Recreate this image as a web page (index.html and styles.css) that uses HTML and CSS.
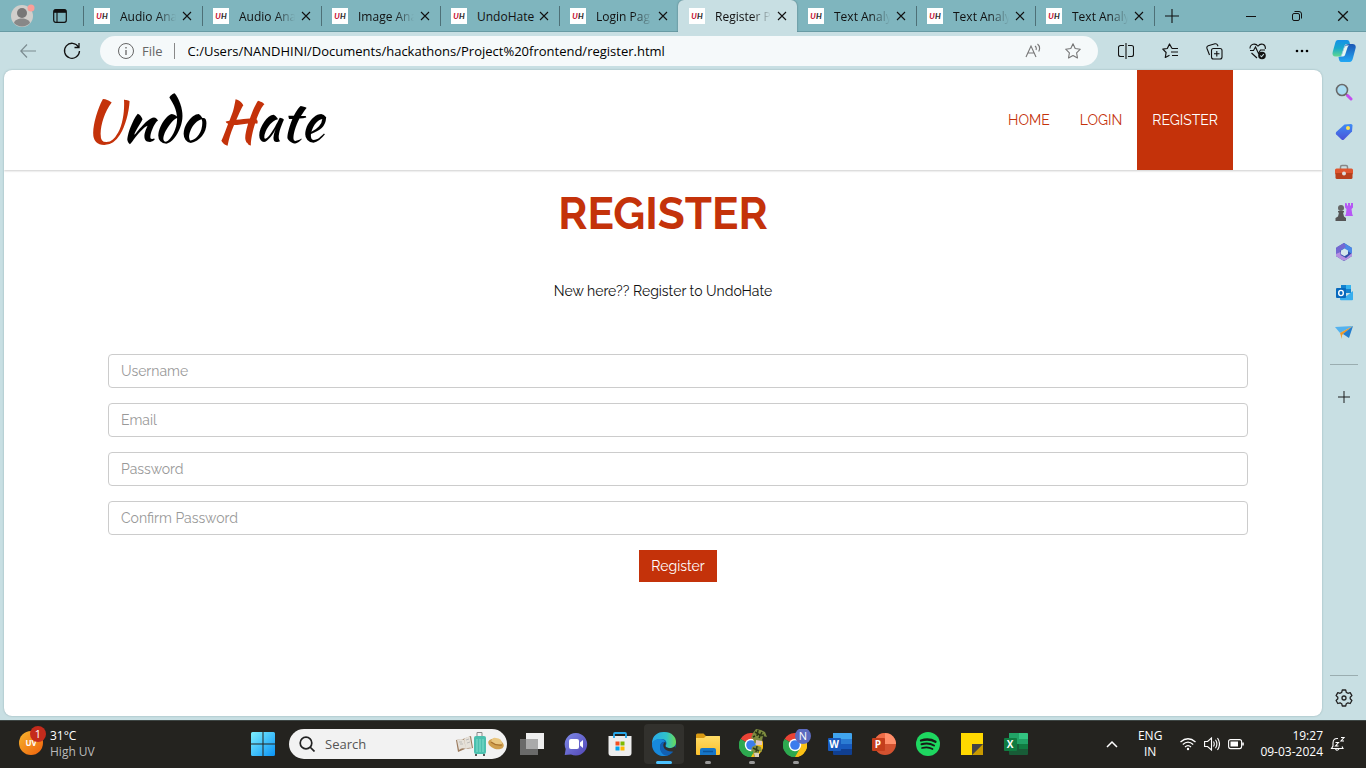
FILE: index.html
```
<!DOCTYPE html>
<html lang="en">
<head>
    <meta charset="UTF-8">
    <meta name="viewport" content="width=device-width, initial-scale=1.0">
    <title>Register Page</title>
    <link rel="stylesheet" href="styles.css">
</head>
<body>

    <!-- shared icons -->
    <svg class="defs" width="0" height="0" aria-hidden="true">
        <defs>
            <linearGradient id="gEdge" x1="0" y1="0" x2="1" y2="0"><stop offset="0" stop-color="#29a9ea"/><stop offset=".6" stop-color="#2fc2c8"/><stop offset="1" stop-color="#6bdc58"/></linearGradient>
            <linearGradient id="gWin" x1="0" y1="0" x2="1" y2="1"><stop offset="0" stop-color="#7df0ff"/><stop offset="1" stop-color="#0a93f5"/></linearGradient>
            <linearGradient id="gCopA" x1="0" y1="0" x2="0" y2="1"><stop offset="0" stop-color="#1590e8"/><stop offset=".5" stop-color="#18a8cc"/><stop offset="1" stop-color="#62d88e"/></linearGradient>
            <linearGradient id="gCopB" x1="0" y1="0" x2="0" y2="1"><stop offset="0" stop-color="#1c56b4"/><stop offset="1" stop-color="#22a8f5"/></linearGradient>
            <linearGradient id="gChat" x1="0" y1="0" x2="1" y2="1"><stop offset="0" stop-color="#7f8be8"/><stop offset="1" stop-color="#5145b5"/></linearGradient>
            <linearGradient id="gUv" x1="0" y1="0" x2="1" y2="1"><stop offset="0" stop-color="#f5b52e"/><stop offset="1" stop-color="#ef5f0b"/></linearGradient>
            <linearGradient id="gTag" x1="0" y1="0" x2="0" y2="1"><stop offset="0" stop-color="#3f8cf5"/><stop offset="1" stop-color="#4a52d8"/></linearGradient>
            <linearGradient id="gFold" x1="0" y1="0" x2="0" y2="1"><stop offset="0" stop-color="#ffdc67"/><stop offset="1" stop-color="#fbc02d"/></linearGradient>
        </defs>
        <symbol id="close" viewBox="0 0 10 10"><path d="M1 1l8 8M9 1l-8 8" fill="none" stroke="#111" stroke-width="1.1"/></symbol>
        <symbol id="plus" viewBox="0 0 14 14"><path d="M7 0v14M0 7h14" fill="none" stroke="#111" stroke-width="1.1"/></symbol>
        <symbol id="chrome" viewBox="0 0 24 24">
            <path d="M12 12L1.6 6A12 12 0 0 1 22.4 6z" fill="#ea4335"/>
            <path d="M12 12L22.4 6A12 12 0 0 1 12 24z" fill="#fbbc05"/>
            <path d="M12 12L12 24A12 12 0 0 1 1.6 6z" fill="#34a853"/>
            <path d="M12 6h10.4A12 12 0 0 1 12 24l5.2-9z" fill="#fbc116"/>
            <path d="M12 24l5.2-9-5.2 3-5.2-3L1.6 6A12 12 0 0 0 12 24z" fill="#2da94f"/>
            <circle cx="12" cy="12" r="6.2" fill="#fff"/>
            <circle cx="12" cy="12" r="4.8" fill="#3b7ded"/>
        </symbol>
    </svg>

    <header class="tabbar">
        <div class="tab-tools">
            <button class="profile" aria-label="Profile">
                <svg width="26" height="24" viewBox="0 0 26 24">
                    <circle cx="12" cy="12" r="11" fill="#d0cecb"/>
                    <circle cx="12" cy="9" r="5" fill="#777"/>
                    <path d="M4 19c1-6 15-6 16 0a11 11 0 0 1-16 0z" fill="#888"/>
                    <circle cx="21" cy="4" r="3.500" fill="#fa9e98"/>
                </svg>
            </button>
            <button class="workspaces" aria-label="Tab actions">
                <svg width="14" height="14" viewBox="0 0 14 14"><rect x=".7" y=".7" width="12.600" height="12.600" rx="2" fill="none" stroke="#111" stroke-width="1.200"/><path d="M1 2.300h12" stroke="#111" stroke-width="3"/><path d="M4 3v10" stroke="#111" stroke-width="1.100"/></svg>
            </button>
        </div>
        <div class="tab"><span class="favicon"><i>U</i>H</span><span class="tab-title">Audio Ana</span><button class="tab-close" aria-label="Close tab"><svg><use href="#close"/></svg></button></div>
        <div class="tab"><span class="favicon"><i>U</i>H</span><span class="tab-title">Audio Ana</span><button class="tab-close" aria-label="Close tab"><svg><use href="#close"/></svg></button></div>
        <div class="tab"><span class="favicon"><i>U</i>H</span><span class="tab-title">Image Ana</span><button class="tab-close" aria-label="Close tab"><svg><use href="#close"/></svg></button></div>
        <div class="tab"><span class="favicon"><i>U</i>H</span><span class="tab-title whole">UndoHate</span><button class="tab-close" aria-label="Close tab"><svg><use href="#close"/></svg></button></div>
        <div class="tab"><span class="favicon"><i>U</i>H</span><span class="tab-title">Login Pag</span><button class="tab-close" aria-label="Close tab"><svg><use href="#close"/></svg></button></div>
        <div class="tab active"><span class="favicon"><i>U</i>H</span><span class="tab-title">Register P</span><button class="tab-close" aria-label="Close tab"><svg><use href="#close"/></svg></button></div>
        <div class="tab"><span class="favicon"><i>U</i>H</span><span class="tab-title">Text Analy</span><button class="tab-close" aria-label="Close tab"><svg><use href="#close"/></svg></button></div>
        <div class="tab"><span class="favicon"><i>U</i>H</span><span class="tab-title">Text Analy</span><button class="tab-close" aria-label="Close tab"><svg><use href="#close"/></svg></button></div>
        <div class="tab"><span class="favicon"><i>U</i>H</span><span class="tab-title">Text Analy</span><button class="tab-close" aria-label="Close tab"><svg><use href="#close"/></svg></button></div>
        <button class="new-tab" aria-label="New tab"><svg width="14" height="14"><use href="#plus"/></svg></button>
        <div class="window-controls">
            <button aria-label="Minimize"><svg width="10" height="10"><path d="M0 5.500h10" stroke="#111"/></svg></button>
            <button aria-label="Restore"><svg width="10" height="10" viewBox="0 0 10 10" fill="none" stroke="#111"><rect x=".5" y="2.500" width="7" height="7" rx="1.500"/><path d="M2.500.5H7a2.500 2.500 0 0 1 2.500 2.500V7.500"/></svg></button>
            <button aria-label="Close"><svg width="12" height="12"><use href="#close"/></svg></button>
        </div>
    </header>

    <div class="toolbar">
        <button class="tool" aria-label="Back"><svg width="16" height="14" viewBox="0 0 16 14" fill="none" stroke="#7b8b90" stroke-width="1.200"><path d="M16 7H1M7 .5L.8 7 7 13.500"/></svg></button>
        <button class="tool" aria-label="Refresh"><svg width="18" height="18" viewBox="0 0 18 18" fill="none" stroke="#111" stroke-width="1.300"><path d="M15.500 5A7.500 7.500 0 1 0 16.500 9M16 1v4.500h-4.500"/></svg></button>
        <div class="address">
            <svg width="16" height="16" viewBox="0 0 16 16" fill="none" stroke="#666"><circle cx="8" cy="8" r="7.500"/><path d="M8 7v5M8 4v1.500" stroke-width="1.300"/></svg>
            <span class="scheme">File</span>
            <input class="url" type="text" aria-label="Address" value="C:/Users/NANDHINI/Documents/hackathons/Project%20frontend/register.html">
            <button class="address-btn" aria-label="Read aloud"><svg width="16" height="16" viewBox="0 0 16 16" fill="none" stroke="#777" stroke-width="1.100"><path d="M1 14L6 3l5 11M2.800 10h6.400M10 3q2 1.500 1 4M12.500 1q3.500 3 1.200 7.500"/></svg></button>
            <button class="address-btn" aria-label="Favorite"><svg width="16" height="16" viewBox="0 0 16 16" fill="none" stroke="#777" stroke-width="1.100" stroke-linejoin="round"><path d="M8 .8l2.200 4.700 5.100.7-3.700 3.600.9 5.200L8 12.500 3.500 15l.9-5.200L.7 6.200l5.100-.7z"/></svg></button>
        </div>
        <button class="tool" aria-label="Split screen"><svg width="16" height="16" viewBox="0 0 16 16" fill="none" stroke="#111" stroke-width="1.100"><path d="M6 2.500H2.500a2 2 0 0 0-2 2v7a2 2 0 0 0 2 2H6M10 2.500h3.500a2 2 0 0 1 2 2v7a2 2 0 0 1-2 2H10M8 0v16"/></svg></button>
        <button class="tool" aria-label="Favorites"><svg width="17" height="16" viewBox="0 0 17 16" fill="none" stroke="#111" stroke-width="1.200" stroke-linejoin="round"><path d="M10 5.500L7.500 1 5.300 5.500.8 6.200l3.300 3.300-.8 5 4.200-2.300M10 5.500h6M9 9h7M10 12.500h6"/></svg></button>
        <button class="tool" aria-label="Collections"><svg width="17" height="17" viewBox="0 0 17 17" fill="none" stroke="#111" stroke-width="1.100"><rect x="5.500" y="5.500" width="10.500" height="10.500" rx="2"/><path d="M3.500 12L1 5.500q-.7-2 1.200-2.800L9 .800q1.800-.4 2.500 1.200l.5 1.200M10.800 8v5.500M8 10.800h5.500"/></svg></button>
        <button class="tool" aria-label="Browser essentials"><svg width="18" height="17" viewBox="0 0 18 17" fill="none" stroke="#111" stroke-width="1.100"><path d="M9 3.300C6.500-.5 1 1 1 5.500M9 3.300c2.500-3.800 8-2.300 7.300 2.700M2.500 10L8 15M1 7.500h3.500L6.500 4l3 6.500 2-3.500H16"/><circle cx="13" cy="12.500" r="3.800" fill="#111" stroke="none"/><path d="M11.300 12.500l1.200 1.300 2.300-2.600" stroke="#c8dfe3"/></svg></button>
        <button class="tool" aria-label="More"><svg width="14" height="4"><circle cx="2" cy="2" r="1.300"/><circle cx="7" cy="2" r="1.300"/><circle cx="12" cy="2" r="1.300"/></svg></button>
        <button class="tool copilot" aria-label="Copilot">
            <svg width="24" height="24" viewBox="0 0 24 24">
                <path d="M6 1h9c2 0 2.500 1.500 3 4h-3c-2 0-2.500 1.500-3 3l-2.500 7.500c-.5 1.500-1.300 2-3 2H3.500C1 17.500 0 15.500.7 13l2.500-9C3.700 2 4.500 1 6 1z" fill="url(#gCopA)"/>
                <path d="M17.500 5h3c2.500 0 3.800 2 3 4.500L21 19c-.7 2.500-1.500 4-3.500 4h-8C7.500 23 7 21 6.500 18c2.300 0 3-1 3.500-2.500L12.500 8c.7-2 2-3 5-3z" fill="url(#gCopB)"/>
                <path d="M14.500 6.500c-1.500.5-2 1.500-2.500 3l-2 6c-.2 1-1 1.700-1.700 2H11c1.200 0 1.800-.8 2.200-2l2.300-7c.4-1 .8-1.600 2-2z" fill="#e6f7f2"/>
            </svg>
        </button>
    </div>

    <div class="content">
        <main class="page">
            <nav class="navbar">
                <div class="container">
                    <a class="brand" href="#"><span>U</span>ndo <span>H</span>ate</a>
                    <div class="menu">
                        <a href="#">HOME</a>
                        <a href="#">LOGIN</a>
                        <a href="#" class="current">REGISTER</a>
                    </div>
                </div>
            </nav>

            <h1>REGISTER</h1>
            <p class="intro">New here?? Register to UndoHate</p>

            <form class="register-form">
                <input type="text" placeholder="Username" aria-label="Username">
                <input type="email" placeholder="Email" aria-label="Email">
                <input type="password" placeholder="Password" aria-label="Password">
                <input type="password" placeholder="Confirm Password" aria-label="Confirm Password">
                <button type="submit">Register</button>
            </form>
        </main>

        <aside class="sidebar">
            <button aria-label="Search"><svg width="18" height="18" viewBox="0 0 18 18"><path d="M11 11l2.500 2.500" stroke="#777" stroke-width="2"/><path d="M12.500 12.500L16 16" stroke="#c44df0" stroke-width="3" stroke-linecap="round"/><circle cx="7" cy="7" r="5.500" fill="#a9dcf2" stroke="#6a6a6a" stroke-width="1.600"/></svg></button>
            <button aria-label="Shopping"><svg width="18" height="18" viewBox="0 0 18 18"><path d="M9.500 1.500L16 1q1.500 0 1.500 1.500L17 8.500 9 16.500q-1.200 1-2.500 0L1.200 11.500q-1-1.200 0-2.500z" fill="url(#gTag)"/><circle cx="13" cy="5" r="2" fill="#ffe14d"/></svg></button>
            <button aria-label="Tools"><svg width="18" height="16" viewBox="0 0 18 16"><path d="M5.500 5V3q0-1.500 1.500-1.500h4q1.500 0 1.500 1.500v2" fill="none" stroke="#888" stroke-width="1.500"/><rect y="4.500" width="18" height="6" rx="1.500" fill="#df562f"/><path d="M.5 9h17v4.500q0 1.500-1.500 1.500H2q-1.500 0-1.500-1.500z" fill="#b8401d"/><circle cx="9" cy="9.500" r="2" fill="#ddd"/></svg></button>
            <button aria-label="Games"><svg width="18" height="18" viewBox="0 0 18 18"><path d="M10 0l2 .5v2h1V0h2v2.500h1V0h2v4.500L16.500 6l.7 5 .8 2h-8l1-2 .5-5-1.500-1.500z" fill="#b657f5"/><circle cx="6" cy="5" r="3" fill="#666"/><path d="M3 8h6v1.500H8l1 4 2 1.500v3H.5v-3l2.500-1.500 1-4H3z" fill="#555"/></svg></button>
            <button aria-label="Microsoft 365"><svg width="18" height="18" viewBox="0 0 18 18"><path d="M9 0l8 5v8l-8 5-8-5V5z" fill="#344fa8"/><path d="M9 0l8 5v6L9 5.500 4 8z" fill="#4a8ae8"/><path d="M9 0L2 4Q1 5 1 6v7l4.500 1.500V7L11 4z" fill="#7468d2"/><path d="M1 11l4.500-2v3L11 15l6-5v3l-6 4q-2 1-4 0l-6-4z" fill="#b690e2"/><path d="M9.500 5.500l3.500 2v3.500l-3.500 2.200-3.500-2V7.500z" fill="#d5e8ec"/></svg></button>
            <button aria-label="Outlook"><svg width="17" height="17" viewBox="0 0 17 17"><path d="M5 1h10v8H5z" fill="#1382cf"/><path d="M10 1h5v4h-5z" fill="#36b4ef"/><path d="M4 8l6.500 4L17 7v8.500q0 .8-1 .8H5q-1 0-1-1z" fill="#38aeee"/><rect y="4" width="10" height="10" rx="1" fill="#0869bd"/><ellipse cx="5" cy="9" rx="2.300" ry="2.600" fill="none" stroke="#fff" stroke-width="1.400"/></svg></button>
            <button aria-label="Drop"><svg width="18" height="16" viewBox="0 0 18 16"><path d="M0 3L18 2 5 9z" fill="#54b2ee"/><path d="M5 9L18 2 7 11v4z" fill="#ef9929"/><path d="M18 2L8 10l6 4z" fill="#237dce"/></svg></button>
            <hr>
            <button aria-label="Customize"><svg width="12" height="12"><use href="#plus"/></svg></button>
            <div class="sidebar-bottom">
                <hr>
                <button aria-label="Settings"><svg width="18" height="18" viewBox="0 0 18 18" fill="none" stroke="#222" stroke-width="1.300" stroke-linejoin="round"><path d="M7.300 1h3.400l.6 2.400 1.600.9 2.300-.7 1.700 3-1.700 1.700v1.500l1.700 1.700-1.700 3-2.300-.7-1.600.9-.6 2.300H7.300l-.6-2.300-1.600-.9-2.300.7-1.700-3 1.700-1.700V8.300L1.100 6.600l1.700-3 2.300.7 1.600-.9z"/><circle cx="9" cy="9" r="2"/></svg></button>
            </div>
        </aside>
    </div>

    <footer class="taskbar">
        <button class="weather">
            <svg width="28" height="30" viewBox="0 0 28 30">
                <circle cx="12" cy="17" r="12" fill="url(#gUv)"/>
                <text x="12" y="20" class="uv-text">UV</text>
                <circle cx="19" cy="8" r="8" fill="#c42b1c"/>
                <text x="19" y="12" class="badge-text">1</text>
            </svg>
            <span class="weather-text"><b>31°C</b><span>High UV</span></span>
        </button>

        <div class="apps">
            <button class="app" aria-label="Start"><svg width="24" height="24" viewBox="0 0 24 24"><path d="M1.500 0H11.500V11.500H0V1.500Q0 0 1.500 0zM12.500 0H22.500Q24 0 24 1.500V11.500H12.500zM0 12.500H11.500V24H1.500Q0 24 0 22.500zM12.500 12.500H24V22.500Q24 24 22.500 24H12.500z" fill="url(#gWin)"/></svg></button>
            <div class="search">
                <svg width="16" height="16" viewBox="0 0 16 16" fill="none" stroke="#222" stroke-width="1.700"><circle cx="7" cy="7" r="5.800"/><path d="M11 11l4.500 4.500"/></svg>
                <input type="search" placeholder="Search" aria-label="Search">
                <svg width="48" height="26" viewBox="0 0 48 26">
                    <path d="M0 9l7-1 8-3 2 12-8 1-7 3z" fill="#9b7a5d"/><path d="M1 9q4-2 7 0l2 9q-4-2-7 1zM8 8q3-3 6-2l2 11q-3-1-6 1z" fill="#e5e0d8"/><path d="M3 11l3 0M4 13l3 0M10 9l3-1M11 12l3-1" stroke="#aaa" stroke-width=".7"/>
                    <path d="M21 7V1.500h5V7" fill="none" stroke="#888"/><rect x="18" y="5" width="12" height="18" rx="2" fill="#4bbfae"/><path d="M21 8v13M24 8v13M27 8v13" stroke="#82dfce"/><path d="M20 23v2M28 23v2" stroke="#555" stroke-width="2"/>
                    <ellipse cx="40" cy="13" rx="8" ry="5" transform="rotate(18 40 13)" fill="#cf9f4e"/><path d="M35 11q1-5 5-4 6 0 6 6-6 2-11-2z" fill="#e9c781"/><path d="M35 11q5 4 11 3" fill="none" stroke="#a8712d" stroke-width="1.200"/>
                </svg>
            </div>
            <button class="app" aria-label="Task view"><svg width="24" height="24" viewBox="0 0 24 24"><rect x="6" y="1" width="18" height="16" fill="#eee"/><rect y="7" width="18" height="16" fill="#777" fill-opacity=".85"/><rect x="6" y="7" width="12" height="10" fill="#aaa"/></svg></button>
            <button class="app" aria-label="Chat"><svg width="24" height="24" viewBox="0 0 24 24"><path d="M12 1a11.300 11.300 0 1 1-5 21.500L.7 23l1-6A11.300 11.300 0 0 1 12 1z" fill="url(#gChat)"/><rect x="5" y="7" width="10" height="10" rx="2" fill="#fff"/><path d="M16 10.500l3-2.500v8l-3-2.500z" fill="#fff"/></svg></button>
            <button class="app" aria-label="Store"><svg width="24" height="24" viewBox="0 0 24 24"><path d="M.5 4h23v17q0 3-3 3h-17q-3 0-3-3z" fill="#eee"/><path d="M6 6V2q0-1 1-1h10q1 0 1 1v4" fill="none" stroke="#28a8ea" stroke-width="1.800"/><path d="M7.500 9.500h4v4h-4z" fill="#f25022"/><path d="M12.500 9.500h4v4h-4z" fill="#7fba00"/><path d="M7.500 14.500h4v4h-4z" fill="#00a4ef"/><path d="M12.500 14.500h4v4h-4z" fill="#ffb900"/></svg></button>
            <button class="app focused" aria-label="Edge"><svg width="24" height="24" viewBox="0 0 24 24"><circle cx="12" cy="12" r="12" fill="#0c59a4"/><path d="M0 12C0 3 6 0 12 0c8 0 12 5 12 10 0 4-3 6-6 6-3 0-5-1-4-3 1-1.500.8-6-4.500-6C5 7 1 9 0 12z" fill="url(#gEdge)"/><path d="M0 12c1-4 5-5.500 9-5 3 .3 4 2 4.500 3-3-1-5.500 1-5.500 5 0 5 4 8 8 8.500C8 26 0 21 0 12z" fill="#1789dc"/><path d="M13 10c2 2-1 3.500 1 5 2 1.600 6 1.600 8.500-.5l1.500 2-1 3q-4 1.500-8 0c-5-2-5.500-7-2-9.500z" fill="#32312d"/><path d="M8 15c0-3 2-5 4-5-2 4 0 10 9 9.500-2 2-4 4-7 4.300-4-1-6-5-6-8.800z" fill="#1260b3"/></svg></button>
            <button class="app running" aria-label="File Explorer"><svg width="24" height="24" viewBox="0 0 24 24"><path d="M0 3q0-1.500 1.500-1.500h6L10 4h14v4H0z" fill="#d99a12"/><path d="M0 6h8l2-2h13q1 0 1 1v17q0 1-1 1H1q-1 0-1-1z" fill="url(#gFold)"/><path d="M4 23v-5q0-2 2-2h12q2 0 2 2v5z" fill="#1676c8"/><path d="M7 19.500h10" stroke="#0b559c" stroke-width="1.500"/></svg></button>
            <button class="app running" aria-label="Chrome">
                <svg width="30" height="30" viewBox="0 0 30 30"><use href="#chrome" x="2" y="4" width="24" height="24"/><path d="M16 4l3-4 5 1 4 2 2 5-4-1-1 5h-5l-2 3-2-5-2-1z" fill="#7d8b3f"/><path d="M18 3l5 3M21 1l-1 6M25 3l-3 6M27 6l-5 1M18 7l-2 1" stroke="#293315" stroke-width="1.500"/><path d="M19 11l6 1v4h-6z" fill="#e1c6bd"/><path d="M15 18l4-2 5 2 1 5-3-1v5h-5l-1-5-2 1z" fill="#858f3f"/><path d="M16 19l6 3M20 17l-1 6" stroke="#333d1a" stroke-width="1.500"/><path d="M17 24h5v4h-4z" fill="#d9cebb"/></svg>
            </button>
            <button class="app running" aria-label="Chrome, profile N">
                <svg width="30" height="30" viewBox="0 0 30 30"><use href="#chrome" x="2" y="4" width="24" height="24"/><circle cx="22" cy="7" r="8" fill="#5c6bc0"/><text x="22" y="11" class="badge-text">N</text></svg>
            </button>
            <button class="app" aria-label="Word"><svg width="24" height="24" viewBox="0 0 24 24"><path d="M5 1h18q1 0 1 1v5H5z" fill="#41a5ee"/><path d="M5 7h19v5H5z" fill="#2b7cd3"/><path d="M5 12h19v5H5z" fill="#185abd"/><path d="M5 17h19v5q0 1-1 1H6q-1 0-1-1z" fill="#103f91"/><rect y="6" width="13" height="13" rx="1" fill="#185abd"/><text x="6" y="16" class="office">W</text></svg></button>
            <button class="app" aria-label="PowerPoint"><svg width="24" height="24" viewBox="0 0 24 24"><circle cx="13" cy="12" r="11" fill="#d35230"/><path d="M13 1a11 11 0 0 1 11 11H13z" fill="#ff8f6b"/><path d="M13 1a11 11 0 0 0-11 11h11z" fill="#ed6c47"/><rect y="6" width="13" height="13" rx="1" fill="#c43e1c"/><text x="6" y="16" class="office">P</text></svg></button>
            <button class="app" aria-label="Spotify"><svg width="24" height="24" viewBox="0 0 24 24" fill="none" stroke="#171a17" stroke-linecap="round"><circle cx="12" cy="12" r="12" fill="#1ed760" stroke="none"/><path d="M5 8.500q8-2.500 14.500 1.200" stroke-width="2.300"/><path d="M5.500 12.300q7-2 12.500 1.200" stroke-width="2"/><path d="M6 16q6-1.700 10.500 1" stroke-width="1.700"/></svg></button>
            <button class="app" aria-label="Sticky Notes"><svg width="22" height="22" viewBox="0 0 22 22"><path d="M0 0h22v11L11 22H0z" fill="#ffd800"/><path d="M11 22l11-11v11z" fill="#c99a00"/><path d="M11 11h11L11 22z" fill="#444"/></svg></button>
            <button class="app" aria-label="Excel"><svg width="24" height="24" viewBox="0 0 24 24"><rect x="5" y="1" width="19" height="22" rx="1" fill="#185c37"/><path d="M5 1h10v11H5z" fill="#21a366"/><path d="M15 1h8q1 0 1 1v5h-9z" fill="#33c481"/><path d="M15 7h9v5h-9z" fill="#21a366"/><path d="M15 12h9v5h-9z" fill="#107c41"/><rect y="6" width="13" height="13" rx="1" fill="#107c41"/><text x="6" y="16" class="office">X</text></svg></button>
        </div>

        <div class="tray">
            <button aria-label="Hidden icons"><svg width="12" height="8" fill="none" stroke="#fff" stroke-width="1.500"><path d="M1 7l5-5 5 5"/></svg></button>
            <button class="lang">ENG<br>IN</button>
            <button class="status" aria-label="Network, sound, battery">
                <svg width="16" height="16" viewBox="0 0 16 16" fill="none" stroke="#fff" stroke-width="1.300"><path d="M.5 6q7.500-6.500 15 0M2.800 8.500q5.200-4.700 10.400 0M5 11q3-2.700 6 0"/><circle cx="8" cy="13" r="1.200" fill="#fff" stroke="none"/></svg>
                <svg width="16" height="16" viewBox="0 0 16 16" fill="none" stroke="#fff" stroke-width="1.100"><path d="M.6 5.500h3L7.500 2v12l-3.900-3.500h-3zM9.500 5.500q1.500 2.500 0 5M11.500 3.800q2.800 4.200 0 8.400M13.500 2q4 6 0 12"/></svg>
                <svg width="16" height="16" viewBox="0 0 16 16" fill="none" stroke="#fff" stroke-width="1.100"><rect x=".6" y="3.600" width="13" height="9" rx="2"/><rect x="2.500" y="5.500" width="7.500" height="5" fill="#fff" stroke="none"/><path d="M15 6.500v3" stroke-width="1.600"/></svg>
            </button>
            <button class="clock">19:27<br>09-03-2024</button>
            <button aria-label="Notifications"><svg width="16" height="16" viewBox="0 0 16 16" fill="none" stroke="#fff" stroke-width="1.100"><path d="M8 2.500Q3 2 3 7v3l-1.500 2.500h11.500L12 10.500M5.500 13q1.500 2.500 3.500 0M5.500 6.500h3l-3 3.500h3M11 1.500h3L11 5h3"/></svg></button>
        </div>
    </footer>

</body>
</html>
```
FILE: styles.css
```
* {
    box-sizing: border-box;
}

body {
    margin: 0;
    height: 100vh;
    display: flex;
    flex-direction: column;
    overflow: hidden;
    background: #c8dfe3;
    font-family: "Open Sans", "Noto Sans", sans-serif;
    font-size: 12px;
    color: #111;
}

button {
    display: flex;
    align-items: center;
    justify-content: center;
    flex-shrink: 0;
    padding: 0;
    border: none;
    background: none;
    color: inherit;
    font: inherit;
    cursor: pointer;
}

input {
    font: inherit;
    outline: none;
}

svg {
    flex-shrink: 0;
}

.defs {
    position: absolute;
}

/* tab strip */

.tabbar {
    display: flex;
    height: 32px;
    flex-shrink: 0;
    background: #7fb5be;
    box-shadow: inset 0 -1px #689ba4;
}

.tab-tools {
    display: flex;
    width: 83px;
}

.profile {
    width: 46px;
}

.workspaces {
    width: 28px;
}

.tab {
    display: flex;
    align-items: center;
    width: 119px;
}

.tab::before,
.new-tab::before {
    content: "";
    width: 1px;
    height: 20px;
    background: #4e7077;
}

.tab.active {
    background: #c8dfe3;
    border-radius: 6px 6px 0 0;
    box-shadow: 0 0 2px #4e7077;
    clip-path: inset(0 -2px 0 -2px);
}

.tab.active::before,
.tab.active + .tab::before {
    background: none;
}

.favicon {
    width: 16px;
    height: 16px;
    margin: 0 10px;
    background: #fff;
    color: #333;
    font: italic 900 8px/16px Lato, sans-serif;
    text-align: center;
}

.favicon i {
    color: #c8203c;
}

.tab-title {
    width: 56px;
    white-space: nowrap;
    mask-image: linear-gradient(90deg, #000 65%, transparent);
}

.tab-title.whole {
    mask-image: none;
}

.tab-close {
    width: 22px;
    height: 22px;
}

.tab-close svg {
    width: 10px;
    height: 10px;
}

.new-tab {
    gap: 10px;
}

.window-controls {
    display: flex;
    margin-left: auto;
}

.window-controls button {
    width: 46px;
}

/* address bar */

.toolbar {
    display: flex;
    align-items: center;
    height: 38px;
    flex-shrink: 0;
    padding: 0 2px 0 6px;
}

.tool {
    width: 44px;
    height: 30px;
}

.copilot {
    width: 40px;
}

.address {
    flex: 1;
    display: flex;
    align-items: center;
    height: 30px;
    margin: 0 6px;
    padding: 0 5px 0 18px;
    border-radius: 15px;
    background: #f5f9fa;
    font-size: 13px;
}

.scheme {
    margin: 0 13px 0 8px;
    padding-right: 11px;
    border-right: 1px solid #888;
    color: #666;
    line-height: 16px;
}

.url {
    flex: 1;
    padding: 0;
    border: none;
    background: none;
}

.address-btn {
    width: 40px;
}

/* page */

.content {
    flex: 1;
    display: flex;
    min-height: 0;
}

.page {
    flex: 1;
    margin: 0 0 4px 4px;
    overflow: hidden;
    border-radius: 8px;
    background: #fff;
    box-shadow: 0 0 2px #8fabb0;
    font-family: Raleway, Lato, sans-serif;
    font-size: 14px;
}

.navbar {
    height: 100px;
    box-shadow: 0 1px 2px rgba(0, 0, 0, 0.2);
}

.container {
    display: flex;
    align-items: center;
    justify-content: space-between;
    max-width: 1170px;
    height: 100%;
    margin: 0 auto;
    padding: 0 15px 0 6px;
}

.brand {
    padding-top: 2px;
    color: #000;
    font: 400 57px/60px "Kaushan Script", Lato, cursive;
    text-decoration: none;
}

.brand span {
    color: #c4320a;
}

.menu {
    display: flex;
    height: 100%;
}

.menu a {
    display: flex;
    align-items: center;
    padding: 0 15px;
    color: #c4320a;
    text-decoration: none;
}

.menu .current {
    background: #c4320a;
    color: #fff;
}

h1 {
    margin: 20px 0 0;
    color: #c4320a;
    font-size: 44px;
    line-height: 48px;
    text-align: center;
}

.intro {
    margin: 42px 0;
    line-height: 22px;
    text-align: center;
}

.register-form {
    display: flex;
    flex-direction: column;
    align-items: center;
    gap: 15px;
    max-width: 1170px;
    margin: 0 auto;
    padding: 10px 0 0 30px;
}

.register-form input {
    width: 100%;
    height: 34px;
    padding: 6px 12px;
    border: 1px solid #ccc;
    border-radius: 4px;
}

.register-form input::placeholder {
    color: #999;
}

.register-form button {
    height: 32px;
    padding: 0 12px;
    background: #c4320a;
    color: #fff;
}

/* right sidebar */

.sidebar {
    display: flex;
    flex-direction: column;
    align-items: center;
    width: 44px;
    padding: 2px 0;
}

.sidebar button {
    width: 40px;
    height: 40px;
}

.sidebar hr {
    width: 28px;
    margin: 12px 0;
    border: none;
    border-top: 1px solid #9aadb0;
}

.sidebar-bottom {
    margin-top: auto;
}

.sidebar-bottom hr {
    margin: 0 6px 2px;
}

/* taskbar */

.taskbar {
    display: flex;
    height: 48px;
    flex-shrink: 0;
    background: #24231f;
    box-shadow: inset 0 1px #3d4543;
    color: #fff;
}

.weather {
    justify-content: flex-start;
    gap: 3px;
    width: 241px;
    padding-left: 19px;
}

.weather svg {
    margin-bottom: 6px;
}

.weather-text {
    display: flex;
    flex-direction: column;
    line-height: 16px;
    text-align: left;
}

.weather-text b {
    font-weight: 400;
}

.weather-text span {
    color: #bbb;
}

.uv-text {
    fill: #fff;
    font-size: 8px;
    font-weight: 700;
    text-anchor: middle;
}

.badge-text {
    fill: #fff;
    font-size: 11px;
    text-anchor: middle;
}

.office {
    fill: #fff;
    font-size: 10px;
    font-weight: 700;
    text-anchor: middle;
}

.apps {
    display: flex;
    align-items: center;
}

.app {
    position: relative;
    width: 44px;
    height: 40px;
}

.app.focused {
    width: 40px;
    margin: 0 2px;
    border-radius: 4px;
    background: #32312d;
}

.app.focused::after,
.app.running::after {
    content: "";
    position: absolute;
    bottom: 0;
    width: 6px;
    height: 3px;
    border-radius: 2px;
    background: #999;
}

.app.focused::after {
    width: 16px;
    background: #4cc2ff;
}

.search {
    display: flex;
    align-items: center;
    width: 218px;
    height: 30px;
    margin: 0 3px 0 4px;
    padding: 0 3px 0 10px;
    border-radius: 15px;
    background: #f2f2f2;
}

.search input {
    flex: 1;
    min-width: 0;
    padding: 0 10px;
    border: none;
    background: none;
    font-size: 13px;
}

.search input::placeholder {
    color: #555;
}

.tray {
    display: flex;
    align-items: center;
    margin-left: auto;
    padding-right: 20px;
    line-height: 16px;
}

.lang {
    margin: 0 18px 0 20px;
}

.status {
    gap: 8px;
}

.clock {
    margin: 0 7px 0 16px;
    text-align: right;
}
```
